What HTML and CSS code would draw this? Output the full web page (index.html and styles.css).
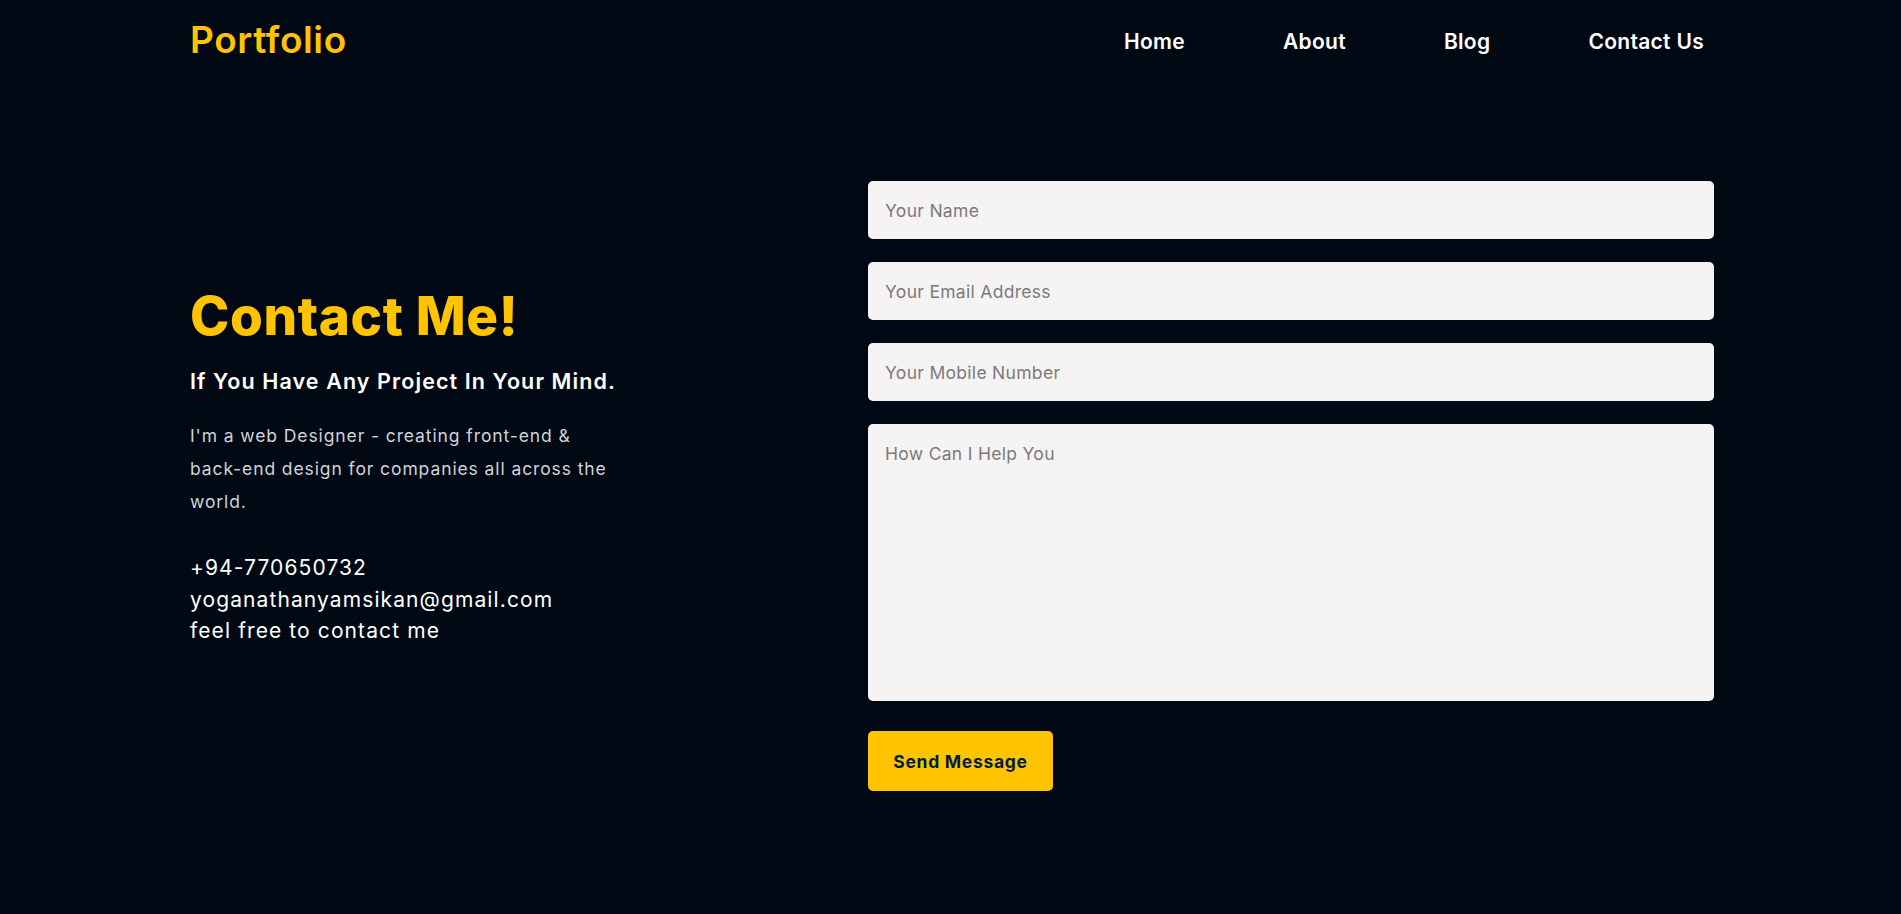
FILE: index.html
```html
<!DOCTYPE html>
<html lang="en">
<head>
<meta charset="utf-8">
<title>Portfolio - Contact</title>
<link rel="stylesheet" href="styles.css">
</head>
<body>
<header class="header">
  <a class="logo" href="#">Portfolio</a>
  <nav class="nav">
    <a href="#">Home</a>
    <a href="#">About</a>
    <a href="#">Blog</a>
    <a href="#">Contact Us</a>
  </nav>
</header>
<main class="contact">
  <div class="contact-info">
    <h1 class="title">Contact Me!</h1>
    <h3 class="subtitle">If You Have Any Project In Your Mind.</h3>
    <p class="desc">I'm a web Designer - creating front-end &amp; back-end design for companies all across the world.</p>
    <div class="details">
      <div>+94-770650732</div>
      <div>yoganathanyamsikan@gmail.com</div>
      <div>feel free to contact me</div>
    </div>
  </div>
  <form class="form">
    <input class="field" type="text" placeholder="Your Name">
    <input class="field" type="email" placeholder="Your Email Address">
    <input class="field" type="text" placeholder="Your Mobile Number">
    <textarea class="field area" placeholder="How Can I Help You"></textarea>
    <button class="btn" type="button">Send Message</button>
  </form>
</main>
</body>
</html>
```
FILE: styles.css
```css
* { box-sizing: border-box; margin: 0; padding: 0; }
html, body { height: 100%; }
body {
  background: #000814;
  font-family: Inter, "Open Sans", sans-serif;
  color: #fff;
  overflow: hidden;
}
a { text-decoration: none; }
.header {
  display: flex;
  justify-content: space-between;
  align-items: flex-start;
  padding: 14px 197px 0 190px;
  height: 84px;
}
.logo {
  color: #ffc300;
  font-size: 37px;
  font-weight: 600;
  letter-spacing: 0.6px;
  line-height: 52px;
}
.nav { display: flex; gap: 98px; padding-top: 13px; }
.nav a {
  color: #fff;
  font-size: 21px;
  font-weight: 600;
  line-height: 30px;
  letter-spacing: 0.3px;
}
.contact {
  display: flex;
  justify-content: space-between;
  align-items: flex-start;
  padding: 97px 187px 0 190px;
}
.contact-info { width: 450px; padding-top: 103px; }
.title {
  color: #ffc300;
  font-size: 53px;
  font-weight: 800;
  line-height: 64px;
  letter-spacing: 0.6px;
}
.subtitle {
  font-size: 21.5px;
  font-weight: 600;
  margin-top: 18px;
  line-height: 30px;
  letter-spacing: 1.1px;
}
.desc {
  max-width: 425px;
  color: #d2d2d6;
  font-size: 17.5px;
  line-height: 33px;
  margin-top: 23px;
  letter-spacing: 0.9px;
}
.details {
  margin-top: 34px;
  font-size: 21px;
  line-height: 31.5px;
  letter-spacing: 1.1px;
}
.form {
  width: 846px;
  display: flex;
  flex-direction: column;
  gap: 23px;
}
.field {
  width: 100%;
  height: 58px;
  border: none;
  border-radius: 5px;
  background: #f5f3f4;
  padding: 0 17px;
  font-family: Inter, "Open Sans", sans-serif;
  font-size: 17.5px;
  letter-spacing: 0.3px;
  color: #333;
  outline: none;
}
.field::placeholder { color: #7c7a7b; }
.area {
  height: 277px;
  padding: 18px 17px;
  resize: none;
  line-height: 24px;
}
.btn {
  margin-top: 7px;
  width: 185px;
  height: 60px;
  border: none;
  border-radius: 5px;
  background: #ffc300;
  color: #001d3d;
  font-family: Inter, "Open Sans", sans-serif;
  font-size: 17.5px;
  font-weight: 700;
  letter-spacing: 0.7px;
}
```
